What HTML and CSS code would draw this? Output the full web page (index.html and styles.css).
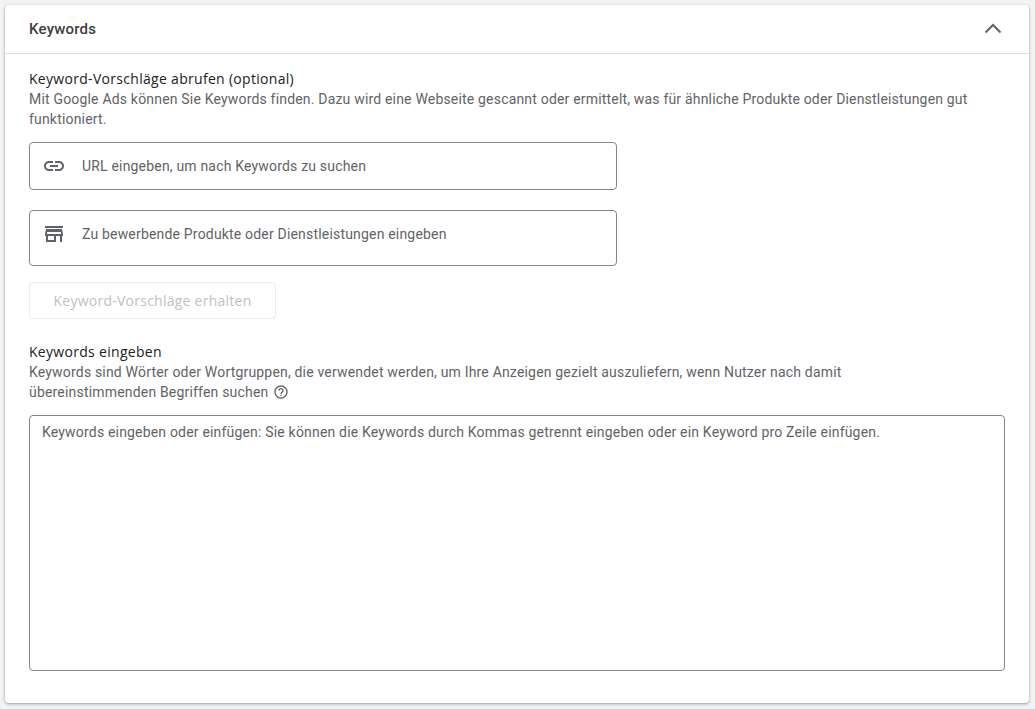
FILE: index.html
```html
<!DOCTYPE html>
<html lang="de">
<head>
<meta charset="utf-8">
<title>Keywords</title>
<link rel="stylesheet" href="styles.css">
</head>
<body>
<section class="card">
  <header class="card-head">
    <h2 class="card-title">Keywords</h2>
    <svg class="chevron" width="24" height="24" viewBox="0 0 24 24"><path d="M4.500 15.500 12 8l7.500 7.500" fill="none" stroke="#5f6368" stroke-width="2"/></svg>
  </header>
  <div class="card-body">
    <h3 class="label">Keyword-Vorschläge abrufen (optional)</h3>
    <p class="desc">Mit Google Ads können Sie Keywords finden. Dazu wird eine Webseite gescannt oder ermittelt, was für ähnliche Produkte oder Dienstleistungen gut funktioniert.</p>
    <div class="field field-url">
      <svg class="field-icon" width="24" height="24" viewBox="0 0 24 24"><path fill="#5f6368" d="M3.900 12c0-1.710 1.390-3.100 3.100-3.100h4V7H7c-2.760 0-5 2.240-5 5s2.240 5 5 5h4v-1.900H7c-1.710 0-3.100-1.390-3.100-3.100zM8 13h8v-2H8v2zm9-6h-4v1.900h4c1.710 0 3.100 1.390 3.100 3.100s-1.390 3.100-3.100 3.100h-4V17h4c2.760 0 5-2.240 5-5s-2.240-5-5-5z"/></svg>
      <span>URL eingeben, um nach Keywords zu suchen</span>
    </div>
    <div class="field field-product">
      <svg class="field-icon" width="24" height="24" viewBox="0 0 24 24"><path fill="#5f6368" fill-rule="evenodd" d="M3 4h18v2H3zM4 7h16l1 5v2h-1v6h-2v-6h-4v6H4v-6H3v-2zM5 10v2h14v-2zM6 14v4h6v-4z"/></svg>
      <span>Zu bewerbende Produkte oder Dienstleistungen eingeben</span>
    </div>
    <button class="btn" type="button" disabled>Keyword-Vorschläge erhalten</button>
    <h3 class="label label-second">Keywords eingeben</h3>
    <p class="desc desc-narrow">Keywords sind Wörter oder Wortgruppen, die verwendet werden, um Ihre Anzeigen gezielt auszuliefern, wenn Nutzer nach damit übereinstimmenden Begriffen suchen
      <svg class="help" width="16" height="16" viewBox="0 0 24 24"><path fill="#5f6368" d="M11 18h2v-2h-2v2zm1-16C6.480 2 2 6.480 2 12s4.480 10 10 10 10-4.480 10-10S17.520 2 12 2zm0 18c-4.410 0-8-3.590-8-8s3.590-8 8-8 8 3.590 8 8-3.590 8-8 8zm0-14c-2.210 0-4 1.790-4 4h2c0-1.100.9-2 2-2s2 .9 2 2c0 2-3 1.750-3 5h2c0-2.250 3-2.500 3-5 0-2.210-1.790-4-4-4z"/></svg>
    </p>
    <div class="keywords-box">Keywords eingeben oder einfügen: Sie können die Keywords durch Kommas getrennt eingeben oder ein Keyword pro Zeile einfügen.</div>
  </div>
</section>
</body>
</html>
```
FILE: styles.css
```css
* { box-sizing: border-box; }
html, body { height: 100%; }
body {
  margin: 0;
  padding: 5px 6px 6px 5px;
  background: #f1f3f4;
  font-family: Roboto, "Liberation Sans", sans-serif;
  font-size: 14px;
  line-height: 20px;
  letter-spacing: .185px;
  color: #5f6368;
  overflow: hidden;
}
.card {
  height: 698px;
  background: #fff;
  border-radius: 4px;
  box-shadow: 0 1px 2px rgba(60,64,67,.3), 0 1px 3px 1px rgba(60,64,67,.15);
}
.card-head {
  height: 49px;
  padding: 0 24px;
  display: flex;
  align-items: center;
  justify-content: space-between;
  border-bottom: 1px solid #dadce0;
}
.card-title {
  margin: 0;
  font-size: 15px;
  font-weight: 500;
  letter-spacing: .2px;
  color: #3c4043;
}
.chevron { display: block; }
.card-body { padding: 15px 24px 0; }
.label {
  margin: 0;
  font-family: "Open Sans", sans-serif;
  font-size: 14px;
  font-weight: 500;
  letter-spacing: .3px;
  color: #202124;
}
.label-second { margin-top: 23px; }
.desc { margin: 0; }
.desc-narrow { max-width: 930px; }
.help { vertical-align: -3px; margin-left: 1px; }
.field {
  width: 588px;
  display: flex;
  gap: 16px;
  padding: 0 12px;
  border: 1px solid #80868b;
  border-radius: 4px;
  background: #fff;
}
.field-url { height: 48px; margin-top: 13px; align-items: center; }
.field-product { height: 56px; margin-top: 20px; padding-top: 13px; }
.field-product .field-icon { margin-top: -2px; }
.field-icon { flex: none; display: block; }
.btn {
  display: block;
  width: 247px;
  height: 37px;
  margin-top: 16px;
  padding: 0;
  background: #fff;
  border: 1px solid #e8eaed;
  border-radius: 4px;
  font-family: "Open Sans", sans-serif;
  font-size: 14px;
  font-weight: 500;
  letter-spacing: .25px;
  color: #bdc1c6;
}
.keywords-box {
  width: 976px;
  height: 256px;
  margin-top: 13px;
  padding: 6px 12px;
  border: 1px solid #80868b;
  border-radius: 4px;
}
```
